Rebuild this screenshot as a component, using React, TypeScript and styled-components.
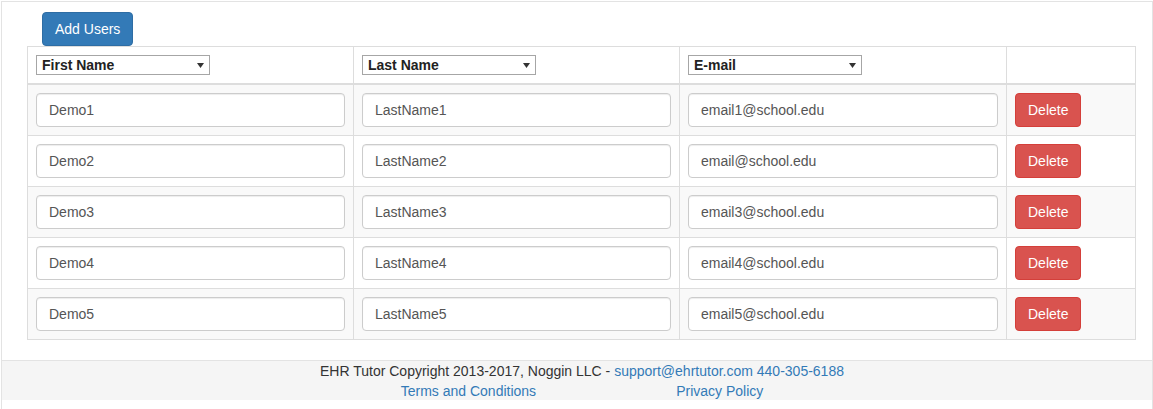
import React from "react";
import styled, { createGlobalStyle } from "styled-components";

const GlobalStyle = createGlobalStyle`
  html, body { margin: 0; padding: 0; background: #fff; }
  body {
    font-family: "Liberation Sans", Arial, Helvetica, sans-serif;
    font-size: 14px;
    line-height: 1.42857;
    color: #333;
    overflow: hidden;
  }
  * { box-sizing: border-box; }
`;

const Panel = styled.div`
  margin: 1px 0 0 1px;
  width: 1152px;
  border: 1px solid #e3e3e3;
  border-bottom: none;
  padding: 10px 0 20px;
  min-height: 420px;
`;

const Content = styled.div`
  padding: 0 15px 0 25px;
`;

const Toolbar = styled.div`
  padding-left: 15px;
  height: 34px;
`;

const Button = styled.button<{ $variant: "primary" | "danger" }>`
  display: inline-block;
  font-family: inherit;
  font-size: 14px;
  line-height: 20px;
  padding: 6px 12px;
  border-radius: 4px;
  border: 1px solid ${(p) => (p.$variant === "primary" ? "#2e6da4" : "#d43f3a")};
  background: ${(p) => (p.$variant === "primary" ? "#337ab7" : "#d9534f")};
  color: #fff;
  cursor: pointer;
  white-space: nowrap;
`;

const Table = styled.table`
  width: 1109px;
  border-collapse: collapse;
  border-spacing: 0;
  border: 1px solid #ddd;
`;

const HeadCell = styled.th<{ $w?: number }>`
  width: ${(p) => (p.$w ? `${p.$w}px` : "auto")};
  padding: 8px;
  border: 1px solid #ddd;
  border-bottom: 2px solid #ddd;
  text-align: left;
  vertical-align: bottom;
  line-height: 20px;
`;

const Row = styled.tr<{ $striped: boolean }>`
  background: ${(p) => (p.$striped ? "#f9f9f9" : "#fff")};
`;

const Cell = styled.td`
  padding: 8px;
  border: 1px solid #ddd;
  vertical-align: top;
  line-height: 20px;
`;

const SelectWrap = styled.div`
  position: relative;
  width: 174px;
  height: 20px;
`;

const Select = styled.select`
  appearance: none;
  -webkit-appearance: none;
  width: 174px;
  height: 20px;
  border: 1px solid #a6a6a6;
  border-radius: 0;
  background: #fff;
  padding: 0 20px 0 5px;
  font-family: "Liberation Sans", Arial, sans-serif;
  font-size: 14px;
  font-weight: bold;
  color: #222;
  line-height: 18px;
`;

const Arrow = styled.svg`
  position: absolute;
  right: 6px;
  top: 8px;
  pointer-events: none;
`;

const Input = styled.input`
  display: block;
  width: 100%;
  height: 34px;
  padding: 6px 12px;
  font-family: inherit;
  font-size: 14px;
  line-height: 20px;
  color: #555;
  background: #fff;
  border: 1px solid #ccc;
  border-radius: 4px;
  box-shadow: inset 0 1px 1px rgba(0, 0, 0, 0.075);
`;

const Footer = styled.footer`
  margin-top: 20px;
  border-top: 1px solid #e3e3e3;
  background: #f5f5f5;
  padding-left: 10px;
  text-align: center;
  line-height: 20px;
  height: 40px;
`;

const Link = styled.a`
  color: #337ab7;
  text-decoration: none;
`;

const LinksRow = styled.div`
  display: flex;
  justify-content: center;
  gap: 140px;
`;

const HeaderSelect = ({ label }: { label: string }) => (
  <SelectWrap>
    <Select defaultValue={label}>
      <option>{label}</option>
    </Select>
    <Arrow width="7" height="5" viewBox="0 0 7 5">
      <path d="M0 0 H7 L3.5 5 Z" fill="#333" />
    </Arrow>
  </SelectWrap>
);

const users = [
  { first: "Demo1", last: "LastName1", email: "email1@school.edu" },
  { first: "Demo2", last: "LastName2", email: "email@school.edu" },
  { first: "Demo3", last: "LastName3", email: "email3@school.edu" },
  { first: "Demo4", last: "LastName4", email: "email4@school.edu" },
  { first: "Demo5", last: "LastName5", email: "email5@school.edu" },
];

export default function App() {
  return (
    <>
      <GlobalStyle />
      <Panel>
        <Content>
          <Toolbar>
            <Button $variant="primary">Add Users</Button>
          </Toolbar>
          <Table>
            <thead>
              <tr>
                <HeadCell $w={326}>
                  <HeaderSelect label="First Name" />
                </HeadCell>
                <HeadCell $w={326}>
                  <HeaderSelect label="Last Name" />
                </HeadCell>
                <HeadCell $w={327}>
                  <HeaderSelect label="E-mail" />
                </HeadCell>
                <HeadCell />
              </tr>
            </thead>
            <tbody>
              {users.map((u, i) => (
                <Row key={u.first} $striped={i % 2 === 0}>
                  <Cell>
                    <Input defaultValue={u.first} />
                  </Cell>
                  <Cell>
                    <Input defaultValue={u.last} />
                  </Cell>
                  <Cell>
                    <Input defaultValue={u.email} />
                  </Cell>
                  <Cell>
                    <Button $variant="danger">Delete</Button>
                  </Cell>
                </Row>
              ))}
            </tbody>
          </Table>
        </Content>
        <Footer>
          <div>
            EHR Tutor Copyright 2013-2017, Noggin LLC -{" "}
            <Link href="#">support@ehrtutor.com</Link> <Link href="#">440-305-6188</Link>
          </div>
          <LinksRow>
            <Link href="#">Terms and Conditions</Link>
            <Link href="#">Privacy Policy</Link>
          </LinksRow>
        </Footer>
      </Panel>
    </>
  );
}
